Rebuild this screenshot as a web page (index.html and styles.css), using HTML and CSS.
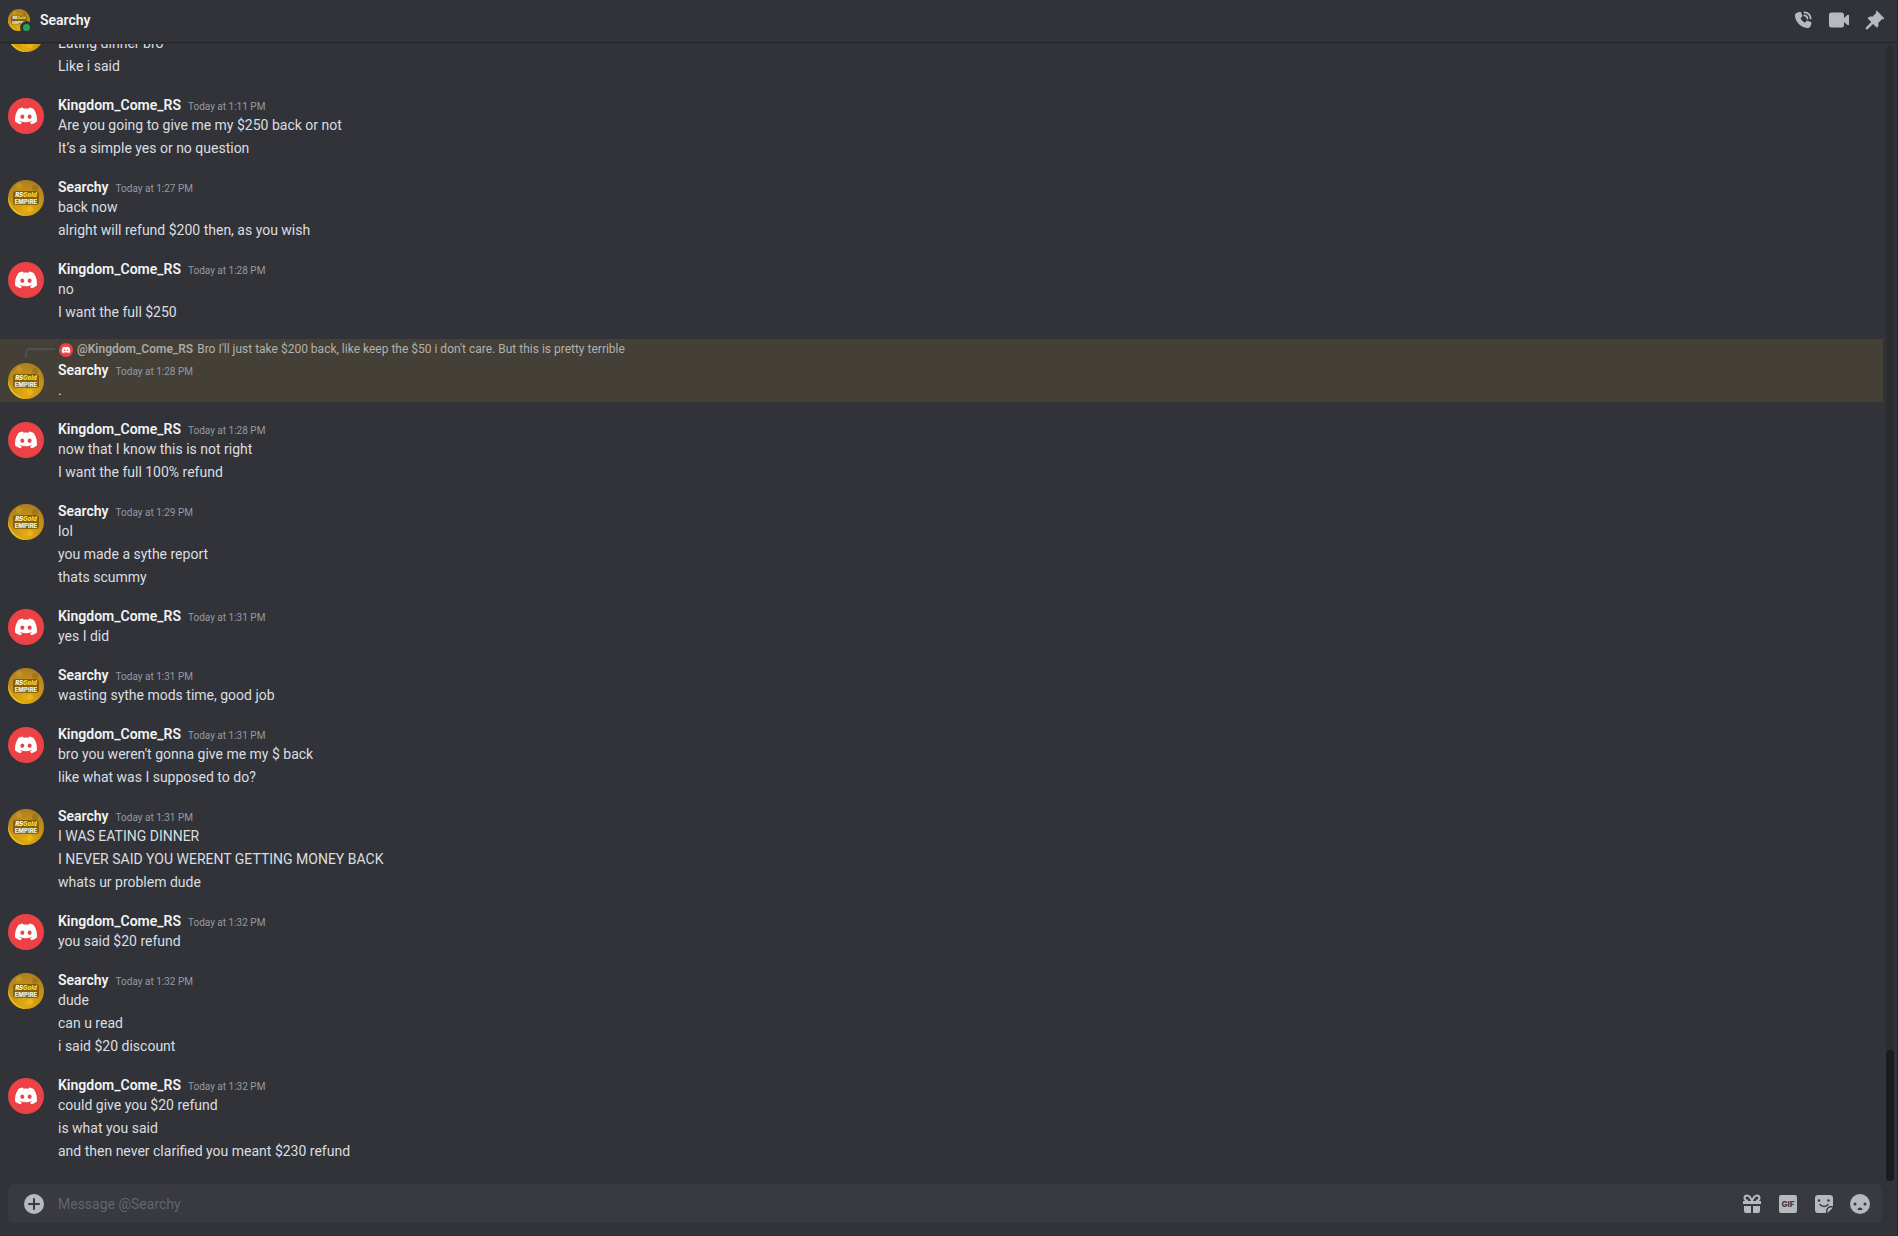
FILE: index.html
```
<!DOCTYPE html>
<html lang="en">
<head>
    <meta charset="UTF-8">
    <meta name="viewport" content="width=device-width, initial-scale=1.0">
    <title>Searchy</title>
    <link rel="stylesheet" href="styles.css">
</head>
<body>
    <!-- shared avatars -->
    <svg class="sprites" aria-hidden="true">
        <defs>
            <radialGradient id="gold" cx="50%" cy="85%" r="90%">
                <stop offset="0" stop-color="#e5ac10"/>
                <stop offset="0.5" stop-color="#c89316"/>
                <stop offset="1" stop-color="#a87b22"/>
            </radialGradient>
            <clipPath id="round"><circle cx="18" cy="18" r="18"/></clipPath>
        </defs>
        <symbol id="discord" viewBox="0 0 36 36">
            <circle cx="18" cy="18" r="18" fill="#ed4245"/>
            <g transform="translate(7 9.5) scale(.173)">
                <path fill="#fff" d="M107.7 8.07A105.15 105.15 0 0 0 81.47 0a72.06 72.06 0 0 0-3.36 6.83 97.68 97.68 0 0 0-29.11 0A72.37 72.37 0 0 0 45.64 0a105.89 105.89 0 0 0-26.25 8.09C2.79 32.65-1.71 56.6.54 80.21a105.73 105.73 0 0 0 32.17 16.15 77.7 77.7 0 0 0 6.89-11.11 68.42 68.42 0 0 1-10.85-5.18c.91-.66 1.8-1.34 2.66-2a75.57 75.57 0 0 0 64.32 0c.87.71 1.76 1.39 2.66 2a68.68 68.68 0 0 1-10.87 5.19 77 77 0 0 0 6.89 11.1 105.25 105.25 0 0 0 32.19-16.14c2.64-27.38-4.51-51.11-18.9-72.15ZM42.45 65.69C36.18 65.69 31 60 31 53s5-12.74 11.43-12.74S54 46 53.89 53s-5.05 12.69-11.44 12.69Zm42.24 0C78.41 65.69 73.25 60 73.25 53s5-12.74 11.44-12.74S96.23 46 96.12 53s-5.04 12.69-11.43 12.69Z"/>
            </g>
        </symbol>
        <symbol id="goldlogo" viewBox="0 0 36 36">
            <g clip-path="url(#round)">
                <rect width="36" height="36" fill="url(#gold)"/>
                <path d="M0 17C3 29 9 33 18 36H0Z" fill="#f8d41c" opacity=".7"/>
                <circle cx="11" cy="6" r="3" fill="#c99b2a" opacity=".7"/>
                <circle cx="27" cy="8" r="3" fill="#86651f" opacity=".5"/>
                <circle cx="22" cy="29" r="3" fill="#f5c62a" opacity=".5"/>
                <rect x="5" y="11" width="26" height="14" rx="3" fill="#4a370d" opacity=".55"/>
            </g>
            <g font-family="Inter, sans-serif" font-weight="800" text-anchor="middle">
                <text x="18" y="17" font-size="6" font-style="italic" fill="#fff">RS<tspan fill="#ffe03a">Gold</tspan></text>
                <text x="18" y="24" font-size="6" fill="#f6f1dd">EMPIRE</text>
            </g>
        </symbol>
    </svg>

    <div class="chat">
        <header class="topbar">
            <div class="status-avatar">
                <svg class="mini"><use href="#goldlogo"/></svg>
                <span class="online"></span>
            </div>
            <h1>Searchy</h1>
            <div class="tools">
                <button class="icon" type="button" aria-label="Start voice call">
                    <svg viewBox="0 0 24 24"><path d="M6.2 2.6 8.4 2c.6-.1 1 .1 1.3.7l1.5 4c.2.5 0 1-.3 1.3L9 9.9c1 2.3 2.8 4.1 5.2 5.3l1.9-2c.4-.4.8-.5 1.3-.3l4.1 1.600c.6.2.8.7.7 1.200l-.7 2.600c-.6 2.200-2.300 3.600-4.600 3.400C9.300 21 3 14.700 2.300 7c-.1-2.300 1.500-3.900 3.900-4.400Z"/><path class="line" d="M13.500 2.800c4.300.2 7.300 3.200 7.600 7.500M13.500 6.500c2.300.2 3.700 1.500 3.900 3.800"/></svg>
                </button>
                <button class="icon" type="button" aria-label="Start video call">
                    <svg viewBox="0 0 24 24"><path d="M3 3h12a3 3 0 0 1 3 3v3.500l4.500-3.700c.6-.5 1.500-.1 1.500.7v11c0 .8-.9 1.200-1.500.7L18 14.500V18a3 3 0 0 1-3 3H3a3 3 0 0 1-3-3V6a3 3 0 0 1 3-3Z"/></svg>
                </button>
                <button class="icon" type="button" aria-label="Pinned messages">
                    <svg viewBox="0 0 24 24"><path d="M13.200 1.300a1 1 0 0 1 1.400 0l8.200 8.200a1 1 0 0 1-1.400 1.400l-.5-.4-5 5c.7 1.900.4 3.700-.9 5.100a1 1 0 0 1-1.400 0l-3.900-3.900-6 5.900c-.8.8-2.100 1-2.600.5-.5-.5-.3-1.800.5-2.600l5.900-6-3.900-3.900a1 1 0 0 1 0-1.400C5 7.900 6.800 7.500 8.700 8.200l5-5-.5-.5a1 1 0 0 1 0-1.400Z"/></svg>
                </button>
            </div>
        </header>

        <div class="body">
            <main class="messages">
                <section class="group">
                    <svg class="avatar"><use href="#goldlogo"/></svg>
                    <div class="text">
                        <div class="meta"></div>
                        <p>Eating dinner bro</p>
                        <p>Like i said</p>
                    </div>
                </section>

                <section class="group">
                    <svg class="avatar"><use href="#discord"/></svg>
                    <div class="text">
                        <div class="meta"><h2>Kingdom_Come_RS</h2><time>Today at 1:11 PM</time></div>
                        <p>Are you going to give me my $250 back or not</p>
                        <p>It’s a simple yes or no question</p>
                    </div>
                </section>

                <section class="group">
                    <svg class="avatar"><use href="#goldlogo"/></svg>
                    <div class="text">
                        <div class="meta"><h2>Searchy</h2><time>Today at 1:27 PM</time></div>
                        <p>back now</p>
                        <p>alright will refund $200 then, as you wish</p>
                    </div>
                </section>

                <section class="group">
                    <svg class="avatar"><use href="#discord"/></svg>
                    <div class="text">
                        <div class="meta"><h2>Kingdom_Come_RS</h2><time>Today at 1:28 PM</time></div>
                        <p>no</p>
                        <p>I want the full $250</p>
                    </div>
                </section>

                <section class="mentioned">
                    <div class="reply">
                        <span class="spine"></span>
                        <svg class="tiny"><use href="#discord"/></svg>
                        <strong>@Kingdom_Come_RS</strong>
                        <span>Bro I'll just take $200 back, like keep the $50 i don't care. But this is pretty terrible</span>
                    </div>
                    <div class="group">
                        <svg class="avatar"><use href="#goldlogo"/></svg>
                        <div class="text">
                            <div class="meta"><h2>Searchy</h2><time>Today at 1:28 PM</time></div>
                            <p>.</p>
                        </div>
                    </div>
                </section>

                <section class="group">
                    <svg class="avatar"><use href="#discord"/></svg>
                    <div class="text">
                        <div class="meta"><h2>Kingdom_Come_RS</h2><time>Today at 1:28 PM</time></div>
                        <p>now that I know this is not right</p>
                        <p>I want the full 100% refund</p>
                    </div>
                </section>

                <section class="group">
                    <svg class="avatar"><use href="#goldlogo"/></svg>
                    <div class="text">
                        <div class="meta"><h2>Searchy</h2><time>Today at 1:29 PM</time></div>
                        <p>lol</p>
                        <p>you made a sythe report</p>
                        <p>thats scummy</p>
                    </div>
                </section>

                <section class="group">
                    <svg class="avatar"><use href="#discord"/></svg>
                    <div class="text">
                        <div class="meta"><h2>Kingdom_Come_RS</h2><time>Today at 1:31 PM</time></div>
                        <p>yes I did</p>
                    </div>
                </section>

                <section class="group">
                    <svg class="avatar"><use href="#goldlogo"/></svg>
                    <div class="text">
                        <div class="meta"><h2>Searchy</h2><time>Today at 1:31 PM</time></div>
                        <p>wasting sythe mods time, good job</p>
                    </div>
                </section>

                <section class="group">
                    <svg class="avatar"><use href="#discord"/></svg>
                    <div class="text">
                        <div class="meta"><h2>Kingdom_Come_RS</h2><time>Today at 1:31 PM</time></div>
                        <p>bro you weren't gonna give me my $ back</p>
                        <p>like what was I supposed to do?</p>
                    </div>
                </section>

                <section class="group">
                    <svg class="avatar"><use href="#goldlogo"/></svg>
                    <div class="text">
                        <div class="meta"><h2>Searchy</h2><time>Today at 1:31 PM</time></div>
                        <p>I WAS EATING DINNER</p>
                        <p>I NEVER SAID YOU WERENT GETTING MONEY BACK</p>
                        <p>whats ur problem dude</p>
                    </div>
                </section>

                <section class="group">
                    <svg class="avatar"><use href="#discord"/></svg>
                    <div class="text">
                        <div class="meta"><h2>Kingdom_Come_RS</h2><time>Today at 1:32 PM</time></div>
                        <p>you said $20 refund</p>
                    </div>
                </section>

                <section class="group">
                    <svg class="avatar"><use href="#goldlogo"/></svg>
                    <div class="text">
                        <div class="meta"><h2>Searchy</h2><time>Today at 1:32 PM</time></div>
                        <p>dude</p>
                        <p>can u read</p>
                        <p>i said $20 discount</p>
                    </div>
                </section>

                <section class="group">
                    <svg class="avatar"><use href="#discord"/></svg>
                    <div class="text">
                        <div class="meta"><h2>Kingdom_Come_RS</h2><time>Today at 1:32 PM</time></div>
                        <p>could give you $20 refund</p>
                        <p>is what you said</p>
                        <p>and then never clarified you meant $230 refund</p>
                    </div>
                </section>
            </main>
            <div class="scrollbar"><div class="thumb"></div></div>
        </div>

        <form class="composer">
            <button class="icon add" type="button" aria-label="Add attachment">
                <svg viewBox="0 0 20 20"><circle cx="10" cy="10" r="10"/><path class="cut" d="M10 5v10M5 10h10"/></svg>
            </button>
            <input class="field" type="text" placeholder="Message @Searchy" aria-label="Message @Searchy">
            <div class="tools">
                <button class="icon" type="button" aria-label="Send a gift">
                    <svg viewBox="0 0 20 20"><path d="M1 7h18v3H1zM2 12h7v7H4a2 2 0 0 1-2-2zM11 12h7v5a2 2 0 0 1-2 2h-5z"/><path class="line" d="M10 7C8.500 3 7 1.500 5 1.500A2.300 2.300 0 0 0 5 6.500M10 7c1.500-4 3-5.500 5-5.500a2.300 2.300 0 0 1 0 5"/></svg>
                </button>
                <button class="icon" type="button" aria-label="Open GIF picker">
                    <svg viewBox="0 0 20 20"><rect x="1" y="1" width="18" height="18" rx="2"/><text x="10" y="13" class="gif">GIF</text></svg>
                </button>
                <button class="icon" type="button" aria-label="Open sticker picker">
                    <svg viewBox="0 0 20 20"><path d="M4 1h12a3 3 0 0 1 3 3v8h-2a5 5 0 0 0-5 5v2H4a3 3 0 0 1-3-3V4a3 3 0 0 1 3-3Z"/><path d="M13.500 19v-2a3.500 3.500 0 0 1 3.500-3.500h2Z"/><g class="hole"><circle cx="5" cy="6.500" r="1.300"/><circle cx="14.500" cy="6.500" r="1.300"/></g><path class="cut thin" d="M6 10.500c2 2.500 6 2.500 8 0"/></svg>
                </button>
                <button class="icon" type="button" aria-label="Select emoji">
                    <svg viewBox="0 0 20 20"><circle cx="10" cy="10" r="10"/><g class="hole"><circle cx="5" cy="10" r="1.500"/><circle cx="15" cy="10" r="1.500"/><path d="M7.500 16c0-3.500 5-3.500 5 0Z"/></g></svg>
                </button>
            </div>
        </form>
    </div>
</body>
</html>
```
FILE: styles.css
```
* {
    box-sizing: border-box;
}
body {
    margin: 0;
    font-family: Roboto, 'Liberation Sans', sans-serif;
    font-size: 14px;
    line-height: 20px;
    color: #dbdee1;
    background: #313338;
}
h1, h2, p {
    margin: 0;
}
.sprites {
    position: absolute;
    width: 0;
    height: 0;
}
.chat {
    display: flex;
    flex-direction: column;
    height: 100vh;
    border-right: 1px solid #27282c;
    border-bottom: 1px solid #35292f;
}

/* top bar */
.topbar {
    display: flex;
    align-items: center;
    flex: none;
    padding: 9px 12px 11px 8px;
    border-bottom: 1px solid #26272b;
    box-shadow: 0 1px 0 #2d2f33;
    z-index: 1;
}
.topbar h1 {
    flex: 1;
    margin-left: 10px;
    font-size: 14px;
    font-weight: 600;
    color: #f2f3f5;
}
.status-avatar {
    position: relative;
    width: 22px;
    height: 22px;
}
.mini {
    display: block;
    width: 22px;
    height: 22px;
}
.online {
    position: absolute;
    right: -3px;
    bottom: -3px;
    width: 13px;
    height: 13px;
    background: #23a55a;
    border: 3px solid #313338;
    border-radius: 50%;
}
.tools {
    display: flex;
    align-items: center;
    gap: 16px;
}
.icon {
    display: block;
    width: 20px;
    height: 20px;
    padding: 0;
    border: none;
    background: none;
    color: #b5bac1;
    cursor: pointer;
}
.icon:hover {
    color: #dbdee1;
}
.icon svg {
    display: block;
    width: 100%;
    height: 100%;
    fill: currentColor;
}
.icon .line {
    fill: none;
    stroke: currentColor;
    stroke-width: 2;
    stroke-linecap: round;
}
.icon .cut {
    fill: none;
    stroke: #383a40;
    stroke-width: 2;
    stroke-linecap: round;
}
.icon .thin {
    stroke-width: 1.5;
}
.icon .hole {
    fill: #383a40;
}
.icon .gif {
    font: 800 8px Inter, sans-serif;
    text-anchor: middle;
    fill: #383a40;
}

/* messages */
.body {
    display: flex;
    flex: 1;
    min-height: 0;
    padding-right: 3px;
}
.messages {
    display: flex;
    flex: 1;
    flex-direction: column;
    justify-content: flex-end;
    gap: 15px;
    min-width: 0;
    padding-bottom: 21px;
    overflow: hidden;
}
.group {
    display: flex;
    flex: none;
    align-items: flex-start;
    gap: 14px;
    padding: 2px 8px;
}
.avatar {
    flex: none;
    width: 36px;
    height: 36px;
    margin-top: 3px;
}
.text {
    display: flex;
    flex-direction: column;
    gap: 3px;
}
.meta {
    display: flex;
    align-items: baseline;
    gap: 7px;
    height: 20px;
    margin-bottom: -3px;
}
.meta h2 {
    font-size: 14px;
    font-weight: 600;
    color: #f2f3f5;
}
.meta time {
    font-size: 10px;
    color: #949ba4;
}
.mentioned {
    flex: none;
    background: #444037;
}
.reply {
    display: flex;
    align-items: center;
    gap: 4px;
    padding: 2px 8px 0 25px;
    font-size: 12px;
    line-height: 17px;
    color: #b0b1b1;
}
.reply strong {
    font-weight: 600;
    color: #a9a9a6;
}
.spine {
    align-self: flex-end;
    width: 30px;
    height: 10px;
    border-top: 2px solid #4e5058;
    border-left: 2px solid #4e5058;
    border-top-left-radius: 5px;
}
.tiny {
    width: 14px;
    height: 14px;
}
.scrollbar {
    display: flex;
    flex-direction: column;
    justify-content: flex-end;
    width: 8px;
    margin: 2px 0 3px 3px;
    background: #2b2d31;
    border-radius: 4px;
}
.thumb {
    height: 11.5%;
    background: #1a1b1e;
    border-radius: 4px;
}

/* composer */
.composer {
    display: flex;
    flex: none;
    align-items: center;
    gap: 14px;
    margin: 0 15px 12px 8px;
    padding: 0 12px 0 16px;
    background: #383a40;
    border-radius: 7px;
}
.field {
    flex: 1;
    height: 39px;
    padding: 0;
    border: none;
    outline: none;
    background: none;
    font: inherit;
    color: #dbdee1;
}
.field::placeholder {
    color: #63656d;
}
```
